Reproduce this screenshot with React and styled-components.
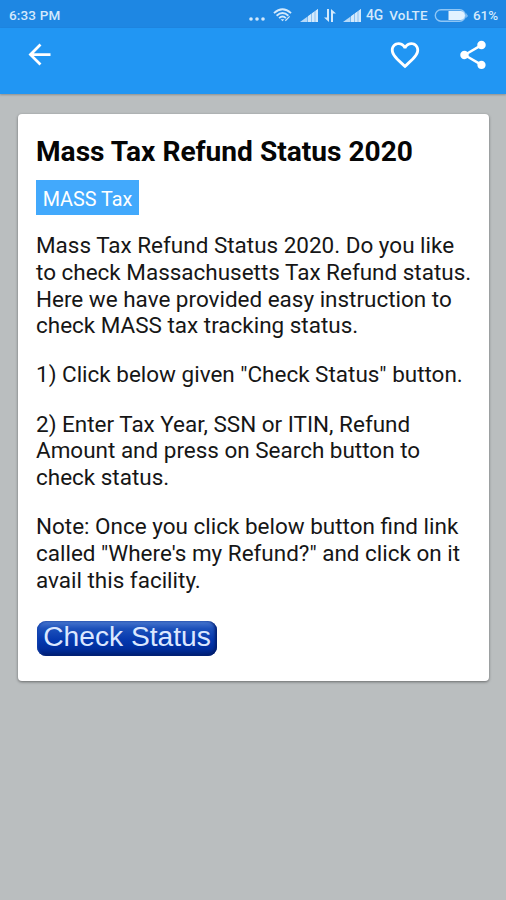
import styled, { createGlobalStyle } from 'styled-components';

const GlobalStyle = createGlobalStyle`
  * {
    box-sizing: border-box;
  }
  body {
    margin: 0;
    background-color: #babebf;
    font-family: Roboto, sans-serif;
  }
`;

const Screen = styled.div`
  width: 506px;
  height: 900px;
  overflow: hidden;
  background-color: #babebf;
`;

const StatusBar = styled.div`
  display: flex;
  align-items: center;
  justify-content: space-between;
  height: 28px;
  padding: 2px 8px 0 9px;
  background-color: #1e87e3;
  color: #d3e9fc;
  font-size: 13.5px;
  font-weight: 500;
  white-space: nowrap;
`;

const Time = styled.span`
  letter-spacing: 0.15px;
`;

const StatusIcons = styled.div`
  display: flex;
  align-items: center;

  svg {
    display: block;
  }
`;

const StatusText = styled.span`
  margin-left: ${(props) => props.$gap}px;
  font-size: ${(props) => props.$size || 13}px;
  letter-spacing: ${(props) => props.$spacing || 0}px;
`;

const Spacer = styled.span`
  width: ${(props) => props.$width}px;
`;

const Toolbar = styled.div`
  display: flex;
  justify-content: space-between;
  height: 66px;
  padding: 10px 16px 0 23px;
  background-color: #2196f3;
  box-shadow: 0 1px 2px rgba(0, 0, 0, 0.25);
`;

const Actions = styled.div`
  display: flex;
  gap: 34px;
`;

const IconButton = styled.button`
  display: flex;
  align-items: flex-start;
  width: 34px;
  height: 34px;
  padding: 0;
  border: none;
  background: none;
  cursor: pointer;

  svg {
    display: block;
    fill: white;
  }
`;

const Card = styled.div`
  width: 471px;
  height: 567px;
  margin: 20px 0 0 18px;
  padding: 20px 0 0 18px;
  border-radius: 4px;
  background-color: white;
  box-shadow: 0 1px 3px rgba(0, 0, 0, 0.45);
  color: #161616;
  white-space: nowrap;
`;

const Title = styled.h1`
  margin: 0;
  color: #050505;
  font-size: 28.1px;
  font-weight: 700;
  line-height: 36px;
`;

const Tag = styled.span`
  display: flex;
  align-items: center;
  justify-content: center;
  width: 103px;
  height: 35px;
  margin: 10px 0 17px;
  padding-top: 3px;
  background-color: #42a9fc;
  color: white;
  font-size: 19.8px;
`;

const Text = styled.p`
  margin: 0 0 22.3px;
  font-size: 22.48px;
  line-height: 26.8px;
`;

const Line = styled.span`
  display: block;
`;

const CheckButton = styled.button`
  display: flex;
  align-items: center;
  justify-content: center;
  width: 180px;
  height: 35px;
  margin: 27px 0 0 1px;
  padding: 0 0 4px;
  border: none;
  border-radius: 9px;
  background: linear-gradient(#4a78cf 0%, #1c50ba 22%, #0538ae 55%, #002d9c 80%, #001f74 100%);
  box-shadow: inset -2px -1px 3px #001d6c, inset 1px 0 2px #1444b0;
  color: #dbe7ff;
  font-family: "Liberation Sans", Arial, sans-serif;
  font-size: 28.2px;
  line-height: 30px;
  cursor: pointer;
`;

const paragraphs = [
  [
    'Mass Tax Refund Status 2020. Do you like',
    'to check Massachusetts Tax Refund status.',
    'Here we have provided easy instruction to',
    'check MASS tax tracking status.',
  ],
  ['1) Click below given "Check Status" button.'],
  [
    '2) Enter Tax Year, SSN or ITIN, Refund',
    'Amount and press on Search button to',
    'check status.',
  ],
  [
    'Note: Once you click below button find link',
    'called "Where\'s my Refund?" and click on it',
    'avail this facility.',
  ],
];

const SignalIcon = () => (
  <svg width="18" height="13" viewBox="0 0 18 13">
    <path d="M0 13 L18 0 V13 Z" fill="#b5d9f9" />
    <path d="M8 7.2 L18 0 V13 H8 Z" fill="#d3e9fc" />
    <path d="M7.5 6 V13 M11.5 3 V13 M15 1 V13" stroke="#1e87e3" strokeWidth="0.4" />
  </svg>
);

const StatusGlyphs = () => (
  <StatusIcons>
    <svg width="16" height="13" viewBox="0 0 16 13" fill="#d3e9fc">
      <circle cx="2" cy="10" r="1.8" />
      <circle cx="8" cy="10" r="1.8" />
      <circle cx="14" cy="10" r="1.8" />
    </svg>
    <Spacer $width={8} />
    <svg width="19" height="14" viewBox="0 0 20 14" fill="none" stroke="#d3e9fc" strokeWidth="1.9">
      <path d="M1 5 Q10 -3 19 5" />
      <path d="M3.8 7.8 Q10 2 16.2 7.8" />
      <path d="M6.4 10.4 Q10 6.8 13.6 10.4" />
      <path d="M8 11.5 L10 13.5 L12 11.5 Z" fill="#d3e9fc" stroke="none" />
      <path d="M13 13 L17.5 8.5" strokeWidth="1.3" />
    </svg>
    <Spacer $width={8} />
    <SignalIcon />
    <Spacer $width={6} />
    <svg width="12" height="13" viewBox="0 0 12 13" fill="#d3e9fc">
      <path d="M3 0 H5 V13 L0 8.5 H3 Z" />
      <path d="M7 0 L12 4.5 H9 V13 H7 Z" />
    </svg>
    <Spacer $width={7} />
    <SignalIcon />
    <StatusText $gap={5} $size={13.8}>4G</StatusText>
    <StatusText $gap={6} $size={13.4} $spacing={0.3}>VoLTE</StatusText>
    <Spacer $width={6} />
    <svg width="35" height="13" viewBox="0 0 34 13">
      <rect x="0.8" y="0.8" width="30" height="11.4" rx="5.7" fill="none" stroke="#8fc6f5" strokeWidth="1.4" />
      <path d="M14 2 H26 A4.5 4.5 0 0 1 26 11 H14 Z" fill="#e2f2ff" />
      <path d="M32 4 Q33.8 6.5 32 9 Z" fill="#d3e9fc" />
    </svg>
    <StatusText $gap={4} $size={13.4}>61%</StatusText>
  </StatusIcons>
);

const App = () => {
  return (
    <Screen>
      <GlobalStyle />
      <StatusBar>
        <Time>6:33 PM</Time>
        <StatusGlyphs />
      </StatusBar>
      <Toolbar>
        <IconButton aria-label="Back">
          <svg width="33" height="33" viewBox="0 0 24 24">
            <path d="M20 11H7.83l5.59-5.59L12 4l-8 8 8 8 1.41-1.41L7.83 13H20v-2z" />
          </svg>
        </IconButton>
        <Actions>
          <IconButton aria-label="Favourite">
            <svg width="34" height="34" viewBox="0 0 24 24">
              <path d="M16.5 3c-1.74 0-3.41.81-4.5 2.09C10.91 3.81 9.24 3 7.5 3 4.42 3 2 5.42 2 8.5c0 3.78 3.4 6.86 8.55 11.54L12 21.35l1.45-1.32C18.6 15.36 22 12.28 22 8.5 22 5.42 19.58 3 16.5 3zm-4.4 15.55l-.1.1-.1-.1C7.14 14.24 4 11.39 4 8.5 4 6.5 5.5 5 7.5 5c1.54 0 3.04.99 3.57 2.36h1.87C13.46 5.99 14.96 5 16.5 5c2 0 3.5 1.5 3.5 3.5 0 2.89-3.14 5.74-7.9 10.05z" />
            </svg>
          </IconButton>
          <IconButton aria-label="Share">
            <svg width="34" height="34" viewBox="0 0 24 24">
              <path d="M18 16.08c-.76 0-1.44.3-1.96.77L8.91 12.7c.05-.23.09-.46.09-.7s-.04-.47-.09-.7l7.05-4.11c.54.5 1.25.81 2.04.81 1.66 0 3-1.34 3-3s-1.34-3-3-3-3 1.34-3 3c0 .24.04.47.09.7L8.04 9.81C7.5 9.31 6.79 9 6 9c-1.66 0-3 1.34-3 3s1.34 3 3 3c.79 0 1.5-.31 2.04-.81l7.12 4.16c-.05.21-.08.43-.08.65 0 1.61 1.31 2.92 2.92 2.92s2.92-1.31 2.92-2.92-1.31-2.92-2.92-2.92z" />
            </svg>
          </IconButton>
        </Actions>
      </Toolbar>
      <Card>
        <Title>Mass Tax Refund Status 2020</Title>
        <Tag>MASS Tax</Tag>
        {paragraphs.map((lines, i) => (
          <Text key={i}>
            {lines.map((line) => (
              <Line key={line}>{line}</Line>
            ))}
          </Text>
        ))}
        <CheckButton>Check Status</CheckButton>
      </Card>
    </Screen>
  );
};

export default App;
